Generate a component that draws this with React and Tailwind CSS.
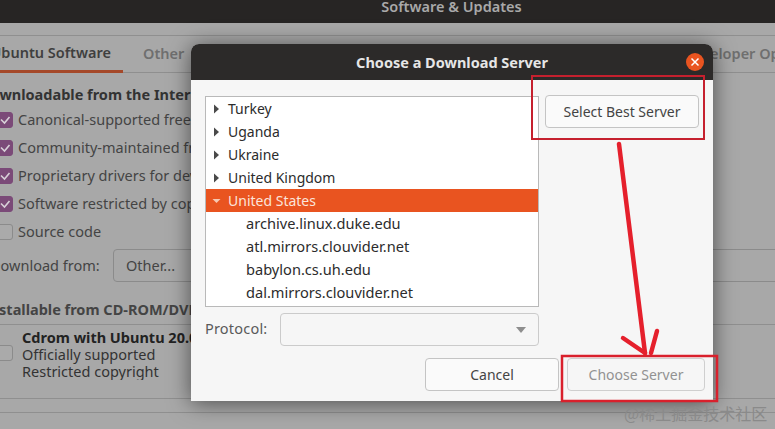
import React from 'react';

const font = { fontFamily: '"Noto Sans", sans-serif' };

const countries = ['Turkey', 'Uganda', 'Ukraine', 'United Kingdom'];
const mirrors = ['archive.linux.duke.edu', 'atl.mirrors.clouvider.net', 'babylon.cs.uh.edu', 'dal.mirrors.clouvider.net'];
const sources = ['Canonical-supported free', 'Community-maintained free', 'Proprietary drivers for dev', 'Software restricted by cop'];

const Check = ({ checked }) => (
    <div className={`w-4 h-4 rounded-[3px] shrink-0 flex items-center justify-center border ${checked ? 'bg-[#7b4a78] border-[#7b4a78]' : 'bg-[#aaaaaa] border-[#8b8b8b]'}`}>
        {checked && (
            <svg width="12" height="12" viewBox="0 0 12 12" fill="none" stroke="#d8d0d8" strokeWidth="1.6">
                <path d="M2 5.5 L5.5 9 L10.5 3" />
            </svg>
        )}
    </div>
);

const Background = () => (
    <div className="flex flex-col h-full bg-[#a8a8a8] text-[#444444] text-[14.5px]">
        <div className="h-[23px] bg-[#272524] shrink-0 flex items-center justify-center text-[#a9a9a9] font-semibold text-[14.5px] overflow-hidden">
            <span className="ml-[128px] -mt-[10px]">Software &amp; Updates</span>
        </div>
        <div className="h-[13px] shrink-0 border-b border-[#8f8f8f]" />
        <div className="h-[37px] shrink-0 flex border-b border-[#8f8f8f] font-semibold text-[#3f3f3f] whitespace-nowrap">
            <div className="w-[123px] h-[37px] border-b-[3px] border-[#a5492a] flex justify-end items-center pr-[12px] overflow-hidden">Ubuntu Software</div>
            <div className="ml-[20px] flex items-center text-[#6f6f6f]">Other</div>
            <div className="ml-auto flex items-center text-[#6f6f6f] -mr-[40px]">Developer Options</div>
        </div>
        <div className="flex flex-col whitespace-nowrap">
            <div className="w-[191px] h-[33px] pt-[10px] overflow-hidden flex items-center">
                <span className="-ml-[20px] font-bold text-[#333333]">Downloadable from the Inter</span>
            </div>
            {sources.map((s) => (
                <div key={s} className="w-[191px] h-[28px] overflow-hidden flex items-center gap-[5px]">
                    <div className="-ml-[3px]"><Check checked /></div>
                    {s}
                </div>
            ))}
            <div className="h-[28px] flex items-center gap-[5px] -ml-[3px]">
                <Check />
                Source code
            </div>
            <div className="h-[33px] mt-[3px] flex items-center -ml-[10px]">
                <span className="w-[123px] shrink-0">Download from:</span>
                <div className="w-[700px] shrink-0 h-[33px] border border-[#8b8b8b] rounded-[4px] flex items-center pl-[12px]">Other...</div>
            </div>
            <div className="w-[775px] h-[43px] flex items-end pb-[3px] border-b border-[#8f8f8f]">
                <div className="w-[191px] overflow-hidden">
                    <span className="block -ml-[16px] font-bold">Installable from CD-ROM/DVD</span>
                </div>
            </div>
            <div className="h-[74px] flex items-start pt-[4px] border-b border-[#8f8f8f]">
                <div className="mt-[16px] -ml-[3px]"><Check /></div>
                <div className="ml-[9px] w-[169px] overflow-hidden flex flex-col leading-[17px] text-[#333333]">
                    <span className="font-bold text-[#222222]">Cdrom with Ubuntu 20.0</span>
                    <span>Officially supported</span>
                    <span>Restricted copyright</span>
                </div>
            </div>
            <div className="h-[14px] border-b border-[#8f8f8f]" />
        </div>
    </div>
);

const Triangle = ({ open }) => (
    <svg width="10" height="10" viewBox="0 0 10 10" className="shrink-0">
        {open ? <path d="M0.5 3 H8.5 L4.5 7 Z" fill="#f6c9b3" /> : <path d="M2 0.5 V9.5 L7 5 Z" fill="#4a4a4a" />}
    </svg>
);

const Tree = () => (
    <div className="h-[211px] w-[334px] bg-white border border-[#b9b9b9] overflow-hidden text-[14.6px] text-[#2c2c2c]">
        {countries.map((c) => (
            <div key={c} className="h-[23px] flex items-center pl-[6px] gap-[6px] text-[14px]">
                <Triangle />
                {c}
            </div>
        ))}
        <div className="h-[23px] flex items-center pl-[6px] gap-[6px] bg-[#e95420] text-[#fbe4da] text-[14px]">
            <Triangle open />
            United States
        </div>
        {mirrors.map((m) => (
            <div key={m} className="h-[23px] flex items-center pl-[40px]">{m}</div>
        ))}
    </div>
);

const Dialog = () => (
    <div className="absolute left-[191px] top-[44px] w-[522px] h-[357px] rounded-t-[8px] bg-[#f6f6f6] shadow-[0_2px_22px_rgba(0,0,0,0.55)] flex flex-col overflow-hidden">
        <div className="h-[36px] shrink-0 bg-[#2c2a29] flex items-center justify-center relative">
            <span className="text-[#e6e6e6] font-bold text-[14.5px] mt-[1px]">Choose a Download Server</span>
            <div className="absolute right-[9px] top-[9px] w-[18px] h-[18px] rounded-full bg-[#e95420] flex items-center justify-center">
                <svg width="10" height="10" viewBox="0 0 10 10" stroke="#ffffff" strokeWidth="1.5">
                    <path d="M1.5 1.5 L8.5 8.5 M8.5 1.5 L1.5 8.5" />
                </svg>
            </div>
        </div>
        <div className="pl-[14px] pt-[16px] flex items-start gap-[6px]">
            <Tree />
            <button className="w-[154px] h-[33px] -mt-[1px] bg-[#fafafa] border border-[#c4c4c4] rounded-[4px] text-[14px] text-[#444444]">Select Best Server</button>
        </div>
        <div className="pl-[14px] mt-[6px] flex items-center">
            <span className="w-[75px] pb-[2px] text-[14.5px] tracking-[0.2px] text-[#5a5a5a]">Protocol:</span>
            <div className="w-[259px] h-[33px] border border-[#cbcbcb] rounded-[4px] flex items-center justify-end pr-[12px]">
                <svg width="10" height="6" viewBox="0 0 10 6"><path d="M0 0 H10 L5 6 Z" fill="#8e8e8e" /></svg>
            </div>
        </div>
        <div className="mt-[12px] pr-[8px] flex justify-end gap-[8px]">
            <button className="w-[134px] h-[33px] bg-[#fafafa] border border-[#c4c4c4] rounded-[4px] text-[14px] text-[#444444]">Cancel</button>
            <button className="w-[138px] h-[33px] bg-[#f6f6f6] border border-[#cfcfcf] rounded-[4px] text-[14px] text-[#929292]">Choose Server</button>
        </div>
    </div>
);

// the red marks someone drew over the screenshot
const Annotations = () => (
    <svg className="absolute inset-0" width="775" height="429" fill="none">
        <rect x="532" y="76" width="172" height="63" stroke="#c5202e" strokeWidth="2" />
        <rect x="562" y="356" width="155" height="45" stroke="#d9202c" strokeWidth="2.5" />
        <g stroke="#e5202c" strokeLinecap="round">
            <path d="M619 144 L645 353" strokeWidth="4.5" />
            <path d="M623 338 L645 353" strokeWidth="4.5" />
            <path d="M657 331 L651 353" strokeWidth="4.5" />
        </g>
    </svg>
);

const App = () => {
    return (
        <div className="relative w-[775px] h-[429px] overflow-hidden" style={font}>
            <Background />
            <Dialog />
            <Annotations />
            <span className="absolute left-[624px] top-[401px] text-[16px] text-[#8a8a8a] whitespace-nowrap" style={{ fontFamily: '"Noto Sans CJK SC", sans-serif' }}>@稀土掘金技术社区</span>
        </div>
    );
};

export default App;
